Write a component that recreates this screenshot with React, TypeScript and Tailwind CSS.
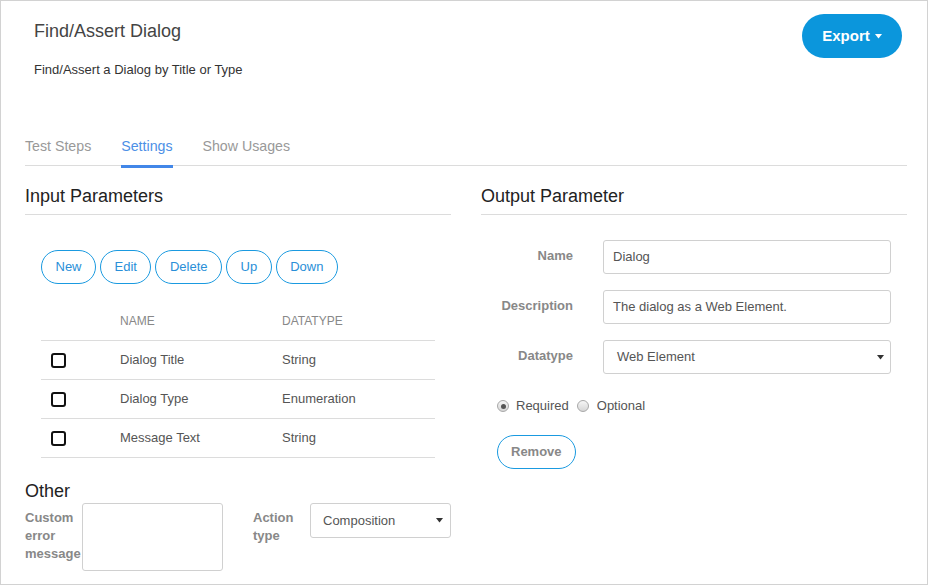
import React from "react";

const Caret = ({ className = "" }: { className?: string }) => (
  <svg width="7" height="5" viewBox="0 0 7 5" className={className}>
    <path d="M0 0 L7 0 L3.5 4.5 Z" fill="currentColor" />
  </svg>
);

const PillButton = ({ label }: { label: string }) => (
  <button className="h-[34px] px-[13.5px] rounded-full border border-[#1a9ae0] bg-white text-[13px] leading-[16px] text-[#2a8fd8]">
    {label}
  </button>
);

const Checkbox = () => (
  <span className="block w-[15px] h-[15px] border-2 border-[#111] rounded-[3px] bg-white" />
);

const Radio = ({ checked }: { checked?: boolean }) => (
  <span className="flex items-center justify-center w-[12px] h-[12px] rounded-full border border-[#a8a8a8] bg-linear-to-b from-[#f6f6f6] to-[#d6d6d6]">
    {checked && <span className="block w-[5px] h-[5px] rounded-full bg-[#555]" />}
  </span>
);

const rows = [
  { name: "Dialog Title", type: "String" },
  { name: "Dialog Type", type: "Enumeration" },
  { name: "Message Text", type: "String" },
];

export default function App() {
  return (
    <div
      className="w-[928px] h-[585px] border border-[#d2d2d2] bg-white overflow-hidden"
      style={{ fontFamily: '"Liberation Sans", Arial, sans-serif' }}
    >
      {/* Header */}
      <div className="flex justify-between items-start pt-[13px] pl-[33px] pr-[25px]">
        <div className="pt-[7px]">
          <div className="text-[18px] leading-[20px] text-[#444]">Find/Assert Dialog</div>
          <div className="mt-[21px] text-[13px] leading-[16px] text-[#333]">
            Find/Assert a Dialog by Title or Type
          </div>
        </div>
        <button className="w-[100px] h-[44px] rounded-full bg-[#0b96dc] text-white font-bold text-[15px] flex items-center justify-center gap-[5px]">
          <span>Export</span>
          <Caret className="mt-[1px]" />
        </button>
      </div>

      <div className="pl-[24px] pr-[20px]">
        {/* Tabs */}
        <div className="mt-[59px] flex gap-[30px] border-b border-[#dcdcdc]">
          <div className="text-[14.2px] leading-[18px] pb-[10px] border-b-[3px] border-transparent -mb-[3px] text-[#999]">
            Test Steps
          </div>
          <div className="text-[14.2px] leading-[18px] pb-[10px] border-b-[3px] border-[#4287e8] -mb-[3px] text-[#4d90e6]">
            Settings
          </div>
          <div className="text-[14.2px] leading-[18px] pb-[10px] border-b-[3px] border-transparent -mb-[3px] text-[#999]">
            Show Usages
          </div>
        </div>

        {/* Columns */}
        <div className="mt-[20px] grid grid-cols-[426px_426px] gap-x-[30px]">
          {/* Left column */}
          <div>
            <div className="text-[18px] leading-[20px] text-[#222] pb-[8px] border-b border-[#dcdcdc]">
              Input Parameters
            </div>
            <div className="px-[16px]">
              <div className="mt-[35px] flex gap-[4px]">
                <PillButton label="New" />
                <PillButton label="Edit" />
                <PillButton label="Delete" />
                <PillButton label="Up" />
                <PillButton label="Down" />
              </div>
              <div className="w-[394px]">
                <div className="grid grid-cols-[79px_162px_1fr] pt-[30px] pb-[12px] border-b border-[#dcdcdc] text-[12px] leading-[14px] text-[#888]">
                  <span />
                  <span>NAME</span>
                  <span>DATATYPE</span>
                </div>
                {rows.map((r) => (
                  <div
                    key={r.name}
                    className="grid grid-cols-[79px_162px_1fr] items-center h-[39px] border-b border-[#dcdcdc] text-[13px] leading-[16px] text-[#555]"
                  >
                    <span className="pl-[10px] pt-[1px]">
                      <Checkbox />
                    </span>
                    <span>{r.name}</span>
                    <span>{r.type}</span>
                  </div>
                ))}
              </div>
            </div>
            <div className="mt-[23px] text-[18px] leading-[20px] text-[#222]">Other</div>
            <div className="mt-[2px] flex items-start">
              <div className="w-[57px] pt-[6px] text-[13px] leading-[18px] font-bold text-[#888]">
                Custom
                <br />
                error
                <br />
                message
              </div>
              <div className="w-[141px] h-[68px] border border-[#d0d0d0] rounded-[3px] bg-white" />
              <div className="ml-[30px] w-[57px] pt-[6px] text-[13px] leading-[18px] font-bold text-[#888]">
                Action
                <br />
                type
              </div>
              <div className="w-[141px] h-[35px] border border-[#d0d0d0] rounded-[3px] bg-white flex items-center justify-between pl-[12px] pr-[7px] text-[13px] text-[#555]">
                <span>Composition</span>
                <Caret className="text-[#333]" />
              </div>
            </div>
          </div>

          {/* Right column */}
          <div>
            <div className="text-[18px] leading-[20px] text-[#222] pb-[8px] border-b border-[#dcdcdc]">
              Output Parameter
            </div>
            <div className="px-[16px]">
              <div className="mt-[25px] grid grid-cols-[76px_1fr] gap-x-[30px] gap-y-[16px]">
                <div className="pt-[7px] text-right text-[13px] leading-[18px] font-bold text-[#888]">Name</div>
                <div className="h-[34px] border border-[#d0d0d0] rounded-[3px] flex items-center pl-[9px] text-[13px] text-[#555]">
                  Dialog
                </div>
                <div className="pt-[7px] text-right text-[13px] leading-[18px] font-bold text-[#888]">Description</div>
                <div className="h-[34px] border border-[#d0d0d0] rounded-[3px] flex items-center pl-[9px] text-[13px] text-[#555]">
                  The dialog as a Web Element.
                </div>
                <div className="pt-[7px] text-right text-[13px] leading-[18px] font-bold text-[#888]">Datatype</div>
                <div className="h-[34px] border border-[#d0d0d0] rounded-[3px] flex items-center justify-between pl-[13px] pr-[6px] text-[13px] text-[#555]">
                  <span>Web Element</span>
                  <Caret className="text-[#333]" />
                </div>
              </div>
              <div className="mt-[24px] flex items-center text-[13px] leading-[16px] text-[#555]">
                <Radio checked />
                <span className="ml-[7px]">Required</span>
                <span className="ml-[8px]">
                  <Radio />
                </span>
                <span className="ml-[8px]">Optional</span>
              </div>
              <button className="mt-[21px] h-[34px] px-[13px] rounded-full border border-[#1a9ae0] bg-white text-[13px] font-bold text-[#888]">
                Remove
              </button>
            </div>
          </div>
        </div>
      </div>
    </div>
  );
}
